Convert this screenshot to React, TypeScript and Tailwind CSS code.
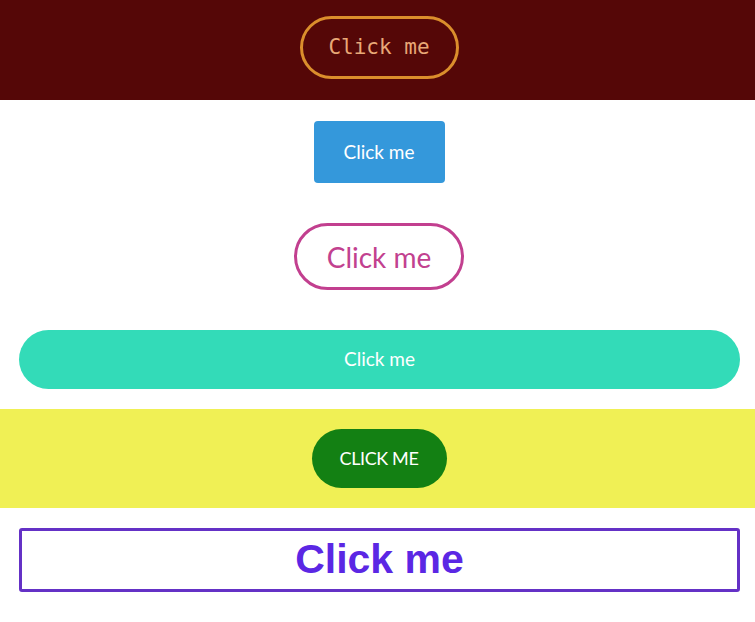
import React from "react";

export default function App() {
  const sans = { fontFamily: "Lato, 'Open Sans', sans-serif" };
  return (
    <div className="w-[755px] h-[622px] bg-white flex flex-col overflow-hidden">
      <div className="h-[100px] bg-[#550707] flex justify-center items-start pt-[16px] pl-[3px] shrink-0">
        <button
          className="w-[159px] h-[63px] rounded-full border-[3px] border-[#db8e2c] text-[#e9a877] text-[21px] flex items-center justify-center"
          style={{ fontFamily: "'DejaVu Sans Mono', monospace" }}
        >
          Click me
        </button>
      </div>
      <div className="flex flex-col items-center pt-[21px] shrink-0">
        <div className="pl-[3px]">
          <button
            className="w-[131px] h-[62px] rounded-[4px] bg-[#3498db] text-white text-[19px] flex items-center justify-center"
            style={sans}
          >
            Click me
          </button>
        </div>
        <div className="pl-[3px] mt-[40px]">
          <button
            className="w-[170px] h-[67px] rounded-full border-[3px] border-[#c23f8f] text-[#c2418f] text-[28px] flex items-center justify-center"
            style={sans}
          >
            Click me
          </button>
        </div>
        <div className="mt-[40px] mb-[20px] w-full">
          <button
            className="ml-[19px] w-[721px] h-[59px] rounded-full bg-[#33dbb8] text-white text-[19px] flex items-center justify-center"
            style={sans}
          >
            Click me
          </button>
        </div>
      </div>
      <div className="h-[99px] bg-[#f0f055] flex justify-center items-start pt-[20px] pl-[3px] shrink-0">
        <button
          className="w-[135px] h-[59px] rounded-full bg-[#138013] text-white text-[18px] tracking-[-0.4px] flex items-center justify-center"
          style={sans}
        >
          CLICK ME
        </button>
      </div>
      <div className="pt-[20px]">
        <button
          className="ml-[19px] w-[721px] h-[64px] rounded-[3px] border-[3px] border-[#6431c6] text-[#5b27e4] text-[41px] font-bold flex items-center justify-center"
          style={{ fontFamily: "'Liberation Sans', Arial, sans-serif" }}
        >
          Click me
        </button>
      </div>
    </div>
  );
}
